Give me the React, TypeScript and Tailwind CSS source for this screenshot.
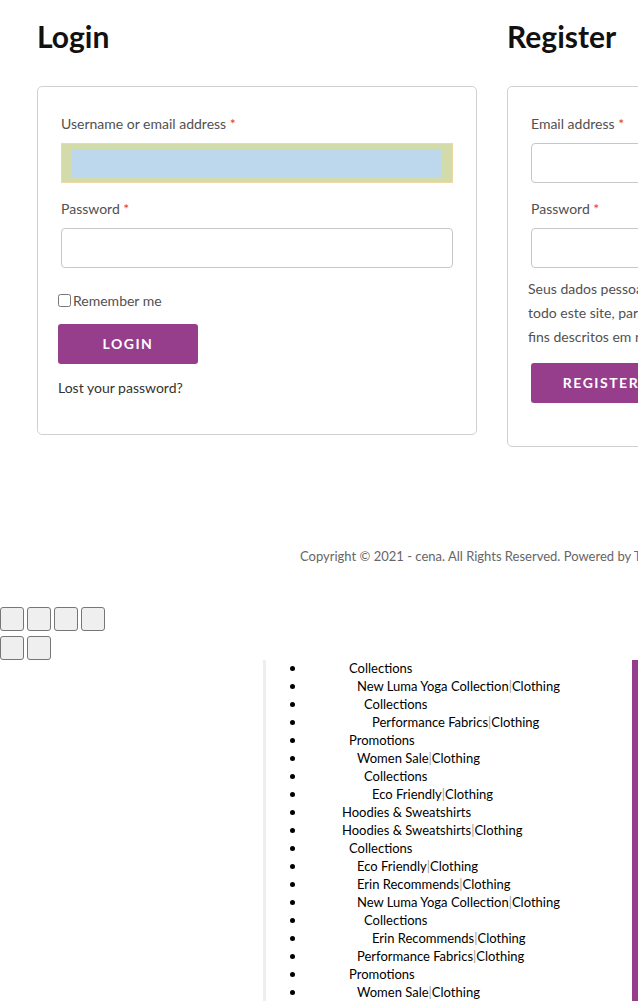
import { useState } from "react"

type Item = { label: string; level: number }

const items: Item[] = [
  { label: "Collections", level: 1 },
  { label: "New Luma Yoga Collection|Clothing", level: 2 },
  { label: "Collections", level: 3 },
  { label: "Performance Fabrics|Clothing", level: 4 },
  { label: "Promotions", level: 1 },
  { label: "Women Sale|Clothing", level: 2 },
  { label: "Collections", level: 3 },
  { label: "Eco Friendly|Clothing", level: 4 },
  { label: "Hoodies & Sweatshirts", level: 0 },
  { label: "Hoodies & Sweatshirts|Clothing", level: 0 },
  { label: "Collections", level: 1 },
  { label: "Eco Friendly|Clothing", level: 2 },
  { label: "Erin Recommends|Clothing", level: 2 },
  { label: "New Luma Yoga Collection|Clothing", level: 2 },
  { label: "Collections", level: 3 },
  { label: "Erin Recommends|Clothing", level: 4 },
  { label: "Performance Fabrics|Clothing", level: 2 },
  { label: "Promotions", level: 1 },
  { label: "Women Sale|Clothing", level: 2 },
]

const indent = ["ml-[47px]", "ml-[54px]", "ml-[62px]", "ml-[69px]", "ml-[77px]"]

const Label = ({ text }: { text: string }) => (
  <label className="block h-[20px] text-[14px] leading-[20px] text-[#515151]">
    {text} <span className="text-[#e2401c]">*</span>
  </label>
)

const TextInput = () => (
  <div className="h-[40px] w-[392px] rounded-[4px] border border-[#c7c7c7] bg-white" />
)

const ItemLabel = ({ label }: { label: string }) => {
  const parts = label.split("|")
  if (parts.length === 1) return <span>{label}</span>
  return (
    <span>
      {parts[0]}
      <span className="text-[#a89a8a]">|</span>
      {parts[1]}
    </span>
  )
}

export default function App() {
  const [remember, setRemember] = useState(false)

  return (
    <div className="w-[638px] min-h-[1004px] overflow-hidden bg-white font-['Lato','Noto_Sans',sans-serif]">
      <div className="flex gap-[30px] pl-[37px]">
        {/* login */}
        <div className="w-[440px] shrink-0">
          <h2 className="mt-[18px] h-[36px] text-[30px] font-bold leading-[36px] text-[#111]">Login</h2>
          <form className="mt-[32px] rounded-[5px] border border-[#d3ced2] pb-[36px] pl-[20px] pt-[27px]">
            <div className="pl-[3px]">
              <Label text="Username or email address" />
              <div className="mt-[9px] flex h-[40px] w-[392px] items-stretch border border-[#ecd9a4] bg-[#d4dbab] py-[5px] pl-[9px] pr-[11px]">
                <div className="flex-1 bg-[#bdd7ed]" />
              </div>
              <div className="mt-[16px]">
                <Label text="Password" />
              </div>
              <div className="mt-[9px]">
                <TextInput />
              </div>
            </div>
            <label className="mt-[22px] flex h-[20px] items-center text-[14px] text-[#515151]">
              <input
                type="checkbox"
                checked={remember}
                onChange={(e) => setRemember(e.target.checked)}
                className="m-0 mr-[2px] h-[13px] w-[13px]"
              />
              Remember me
            </label>
            <button
              type="button"
              className="mt-[14px] h-[40px] w-[140px] rounded-[3px] bg-[#963d8c] pb-[2px] text-[14px] font-bold tracking-[1.5px] text-white"
            >
              LOGIN
            </button>
            <p className="mt-[14px] h-[20px] text-[14px] leading-[20px] text-[#333]">Lost your password?</p>
          </form>
        </div>

        {/* register */}
        <div className="w-[440px] shrink-0">
          <h2 className="mt-[18px] h-[36px] text-[30px] font-bold leading-[36px] text-[#111]">Register</h2>
          <form className="mt-[32px] rounded-[5px] border border-[#d3ced2] pb-[43px] pl-[20px] pt-[27px]">
            <div className="pl-[3px]">
              <Label text="Email address" />
              <div className="mt-[9px]">
                <TextInput />
              </div>
              <div className="mt-[16px]">
                <Label text="Password" />
              </div>
              <div className="mt-[9px]">
                <TextInput />
              </div>
            </div>
            <p className="mt-[9px] whitespace-nowrap text-[14px] leading-[24px] text-[#515151]">
              Seus dados pessoais serão usados para aprimorar a sua experiência em
              <br />
              todo este site, para gerenciar o acesso a sua conta e para outros
              <br />
              fins descritos em nossa política de privacidade.
            </p>
            <button
              type="button"
              className="ml-[3px] mt-[14px] h-[40px] w-[140px] rounded-[3px] bg-[#963d8c] pb-[2px] text-[14px] font-bold tracking-[1.5px] text-white"
            >
              REGISTER
            </button>
          </form>
        </div>
      </div>

      {/* footer */}
      <div className="mt-[99px] h-[20px] whitespace-nowrap pl-[300px] text-[13px] leading-[20px] text-[#666]">
        Copyright © 2021 - cena. All Rights Reserved. Powered by <span className="text-[#2a7de1]">ThemeGrill</span>
      </div>

      {/* empty buttons */}
      <div className="mt-[41px] flex gap-[3px]">
        {[0, 1, 2, 3].map((i) => (
          <button key={i} type="button" className="h-[24px] w-[24px] rounded-[3px] border border-[#767676] bg-[#efefef]" />
        ))}
      </div>
      <div className="mt-[5px] flex gap-[3px]">
        {[0, 1].map((i) => (
          <button key={i} type="button" className="h-[24px] w-[24px] rounded-[3px] border border-[#767676] bg-[#efefef]" />
        ))}
      </div>

      {/* category list */}
      <div className="flex">
        <div className="w-[263px] shrink-0" />
        <div className="flex-1 border-l-[3px] border-[#eeeeee] pl-[24px]">
          <ul className="-mt-[1px]">
            {items.map((item, i) => (
              <li key={i} className="flex h-[18px] items-center text-[13px] leading-[18px] text-black">
                <span className="h-[5px] w-[5px] shrink-0 rounded-full bg-black" />
                <span className={indent[item.level]}>
                  <ItemLabel label={item.label} />
                </span>
              </li>
            ))}
          </ul>
        </div>
        <div className="w-[6px] shrink-0 bg-[#963d8c]" />
      </div>
    </div>
  )
}
